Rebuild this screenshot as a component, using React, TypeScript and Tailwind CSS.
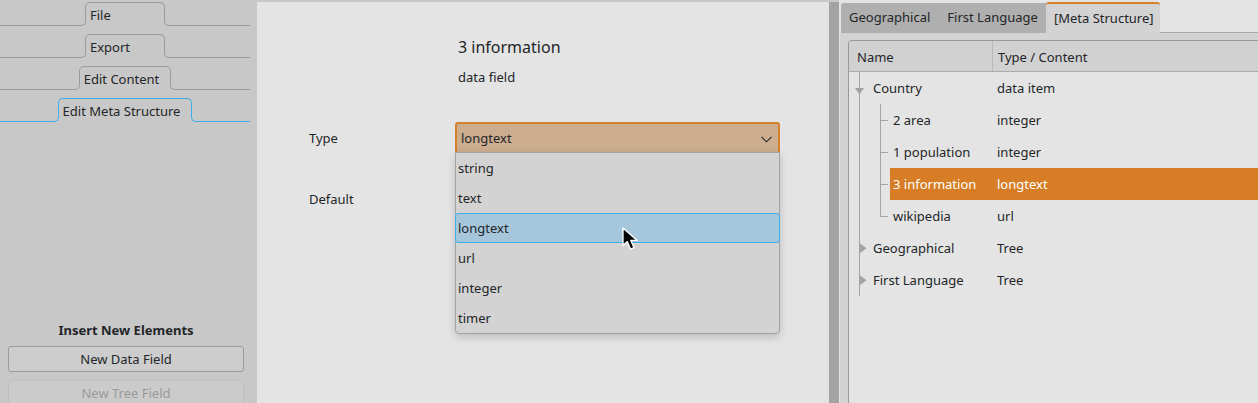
import React from "react";

function VTab({ label, active }: { label: string; active?: boolean }) {
  const c = active ? "border-[#3daee9]" : "border-[#9b9b9b]";
  return (
    <div className="flex h-[24px]">
      <div className={`flex-1 self-end h-[6px] border-b border-r rounded-br-[5px] -mr-px ${c}`} />
      <div className="flex flex-col min-w-[80px]">
        <div className={`h-[19px] border-t border-x rounded-t-[5px] pl-[4px] pr-[11px] pt-[3px] leading-[18px] whitespace-nowrap ${c}`}>
          {label}
        </div>
        <div className="h-[5px]" />
      </div>
      <div className={`flex-1 self-end h-[6px] border-b border-l rounded-bl-[5px] -ml-px ${c}`} />
    </div>
  );
}

const rows = [
  { name: "Country", type: "data item", level: 0 },
  { name: "2 area", type: "integer", level: 1 },
  { name: "1 population", type: "integer", level: 1 },
  { name: "3 information", type: "longtext", level: 1, sel: true },
  { name: "wikipedia", type: "url", level: 1 },
  { name: "Geographical", type: "Tree", level: 0 },
  { name: "First Language", type: "Tree", level: 0 },
];

const items = ["string", "text", "longtext", "url", "integer", "timer"];

export default function App() {
  return (
    <div className="w-[1258px] h-[403px] flex overflow-hidden bg-[#c8c8c8] text-[13px] text-[#232629] [font-family:'Noto_Sans',sans-serif]">
      {/* Left panel */}
      <div className="w-[257px] shrink-0 flex flex-col pt-[2px]">
        <div className="w-[250px] flex flex-col gap-[8px]">
          <VTab label="File" />
          <VTab label="Export" />
          <VTab label="Edit Content" />
          <VTab label="Edit Meta Structure" active />
        </div>
        <div className="w-[250px] mt-[199px] flex flex-col">
          <div className="text-center font-bold leading-[18px] pl-[2px]">Insert New Elements</div>
          <div className="ml-[8px] w-[236px] h-[26px] mt-[7px] pt-[2px] rounded-[3px] border border-[#9b9b9b] bg-[#cdcdcd] flex items-center justify-center shrink-0">
            New Data Field
          </div>
          <div className="ml-[8px] w-[236px] h-[26px] mt-[8px] pt-[2px] rounded-[3px] border border-[#c0c0c0] bg-[#cbcbcb] text-[#9a9a9a] flex items-center justify-center shrink-0">
            New Tree Field
          </div>
        </div>
      </div>

      {/* Middle panel */}
      <div className="w-[572px] shrink-0 mt-[2px] bg-[#e4e4e4] relative">
        <div className="pl-[201px] pt-[34px]">
          <div className="text-[16px] leading-[22px]">3 information</div>
          <div className="mt-[10px] leading-[18px]">data field</div>
        </div>
        <div className="mt-[36px] pl-[52px] grid grid-cols-[146px_325px] items-center gap-y-[30px]">
          <div className="pt-[2px]">Type</div>
          <div className="h-[32px] border-2 border-[#d6802a] rounded-[3px] bg-[#ccad90] flex items-center justify-between pl-[4px] pr-[6px] pt-[2px]">
            <span>longtext</span>
            <svg width="11" height="7" viewBox="0 0 11 7">
              <polyline points="0.5,0.8 5.5,5.8 10.5,0.8" fill="none" stroke="#232629" strokeWidth="1.1" />
            </svg>
          </div>
          <div className="h-[30px] flex items-center pt-[2px]">Default</div>
          <div className="h-[30px]" />
        </div>

        {/* Dropdown popup */}
        <div className="absolute left-[198px] top-[150px] w-[325px] h-[182px] bg-[#d3d3d3] border border-[#a3a3a3] rounded-b-[4px] shadow-[0_3px_8px_rgba(0,0,0,0.18)] flex flex-col">
          {items.map((it) =>
            it === "longtext" ? (
              <div key={it} className="h-[30px] shrink-0 flex items-center pl-[2px] pt-[2px] border border-[#3daee9] rounded-[3px] bg-[#a5c6db] -mx-px">
                {it}
              </div>
            ) : (
              <div key={it} className="h-[30px] shrink-0 flex items-center pl-[2px] pt-[2px]">
                {it}
              </div>
            )
          )}
        </div>

        {/* Mouse cursor */}
        <svg className="absolute left-[364px] top-[224px]" width="20" height="26" viewBox="0 0 20 26">
          <path d="M2 2 L2 19.5 L6.3 15.6 L9.6 23.2 L13 21.7 L9.8 14.4 L16.2 14.4 Z" fill="#000" stroke="#fff" strokeWidth="1.3" strokeLinejoin="round" />
        </svg>
      </div>

      {/* Splitter */}
      <div className="w-[10px] shrink-0 mt-[2px] bg-[#a3a3a3]" />

      {/* Right panel */}
      <div className="flex-1 flex flex-col bg-[#e4e4e4] min-w-0">
        <div className="h-[33px] flex items-end pl-[2px] shrink-0">
          <div className="h-[30px] bg-[#afafaf] rounded-tl-[3px] flex items-center whitespace-nowrap">
            <span className="pl-[8px] pr-[9px]">Geographical</span>
            <span className="pl-[8px] pr-[8px]">First Language</span>
          </div>
          <div className="h-[31px] bg-[#d3d3d3] border-t-2 border-[#d6802a] rounded-t-[3px] pl-[8px] pr-[6px] flex items-center whitespace-nowrap">
            [Meta Structure]
          </div>
          <div className="flex-1 h-full border-b border-[#a9a9a9]" />
        </div>
        <div className="flex-1 flex ml-[1px] bg-[#d3d3d3] pl-[8px] pt-[7px]">
          <div className="flex-1 flex flex-col border-l border-t border-[#999999] rounded-tl-[4px] bg-[#e4e4e4] overflow-hidden">
            <div className="h-[31px] shrink-0 flex bg-[#d1d1d1] border-b border-[#ababab]">
              <div className="w-[144px] border-r border-[#b8b8b8] pl-[8px] pt-[4px] flex items-center">Name</div>
              <div className="pl-[5px] pt-[4px] flex items-center">Type / Content</div>
            </div>
            <div className="relative flex flex-col">
              {rows.map((r) => (
                <div key={r.name} className="flex h-[32px]">
                  <div className={r.level === 0 ? "w-[20px] shrink-0" : "w-[41px] shrink-0"} />
                  <div className={`flex-1 flex items-center pt-[2px] whitespace-nowrap ${r.sel ? "bg-[#d67d26] text-white" : ""}`}>
                    <div className={r.level === 0 ? "w-[124px] pl-[4px]" : "w-[103px] pl-[3px]"}>{r.name}</div>
                    <div className="pl-[4px]">{r.type}</div>
                  </div>
                </div>
              ))}
              <svg className="absolute left-0 top-0 pointer-events-none" width="60" height="240" viewBox="0 0 60 240">
                <g stroke="#a3a3a3" strokeWidth="1" fill="none">
                  <line x1="10.5" y1="0" x2="10.5" y2="224" />
                  <line x1="31.5" y1="32" x2="31.5" y2="144.5" />
                  <line x1="31.5" y1="48.5" x2="39" y2="48.5" />
                  <line x1="31.5" y1="80.5" x2="39" y2="80.5" />
                  <line x1="31.5" y1="112.5" x2="39" y2="112.5" />
                  <line x1="31.5" y1="144.5" x2="39" y2="144.5" />
                </g>
                <g fill="#a3a3a3">
                  <polygon points="6,16 15,16 10.5,22.5" />
                  <polygon points="11,171.5 11,181 17.5,176.25" />
                  <polygon points="11,203.5 11,213 17.5,208.25" />
                </g>
              </svg>
            </div>
          </div>
        </div>
      </div>
    </div>
  );
}
